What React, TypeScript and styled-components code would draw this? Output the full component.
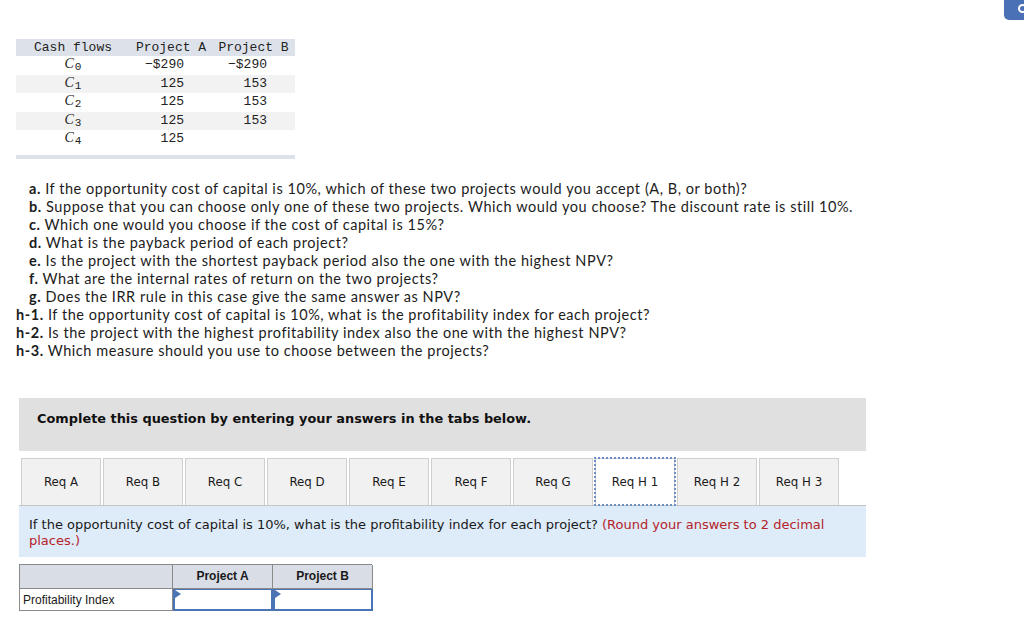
import React from "react";
import styled, { createGlobalStyle } from "styled-components";

const GlobalStyle = createGlobalStyle`
  html, body {
    margin: 0;
    padding: 0;
    background: #ffffff;
    overflow: hidden;
  }
  body {
    font-family: "Lato", "Liberation Sans", sans-serif;
    color: #1a1a1a;
  }
`;

const Page = styled.div`
  position: relative;
  width: 1024px;
  height: 617px;
  padding: 39px 0 0 16px;
  box-sizing: border-box;
`;

const CornerButton = styled.div`
  position: absolute;
  top: -6px;
  right: -14px;
  width: 34px;
  height: 26px;
  border-radius: 5px;
  background: #4a70b6;
  &::after {
    content: "";
    position: absolute;
    left: 14px;
    top: 10px;
    width: 9px;
    height: 9px;
    border: 2px solid #ffffff;
    border-radius: 50%;
    box-sizing: border-box;
  }
`;

/* cash flow table */
const FlowTable = styled.div`
  width: 279px;
  display: grid;
  grid-template-columns: 114px 82px 83px;
  font-family: "Liberation Mono", "Courier New", monospace;
  font-size: 13px;
  color: #222;
`;

const FlowCell = styled.div<{ $head?: boolean; $shade?: boolean; $num?: boolean }>`
  height: ${(p) => (p.$head ? "17px" : "18.5px")};
  line-height: ${(p) => (p.$head ? "17px" : "18.5px")};
  background: ${(p) => (p.$head ? "#dde2ea" : p.$shade ? "#f2f2f2" : "#ffffff")};
  text-align: ${(p) => (p.$num ? "right" : "center")};
  padding-right: ${(p) => (p.$num ? "28px" : "0")};
  white-space: nowrap;
  overflow: hidden;
`;

const FlowLabel = styled.span`
  display: inline-block;
  line-height: 1;
  font-family: "Liberation Serif", serif;
  font-style: italic;
  font-size: 14px;
  sub {
    font-family: "Liberation Mono", monospace;
    font-style: normal;
    font-size: 11px;
    line-height: 1;
    vertical-align: -2px;
    margin-left: 1px;
  }
`;

const FlowFooter = styled.div`
  width: 279px;
  height: 4px;
  margin-top: 6px;
  background: #dde2ea;
`;

/* questions */
const Questions = styled.div`
  margin-top: 21px;
  font-size: 14.5px;
  letter-spacing: 0.55px;
  line-height: 18px;
  color: #1c1c1c;
`;

const Question = styled.div<{ $indent?: boolean }>`
  padding-left: ${(p) => (p.$indent ? "13px" : "0")};
  white-space: nowrap;
  b {
    font-weight: 700;
  }
`;

/* instructions */
const Banner = styled.div`
  margin: 38px 0 0 3px;
  width: 847px;
  height: 53px;
  box-sizing: border-box;
  padding: 13px 0 0 18px;
  background: #e0e0e0;
  font-family: "DejaVu Sans", Verdana, sans-serif;
  font-weight: 700;
  font-size: 12.9px;
  color: #111;
`;

const Tabs = styled.div`
  margin: 7px 0 0 5px;
  display: flex;
  gap: 2px;
`;

const Tab = styled.div<{ $active?: boolean }>`
  width: 80px;
  height: 47px;
  box-sizing: border-box;
  display: flex;
  align-items: center;
  justify-content: center;
  border: 1px solid #cfcfcf;
  border-bottom: none;
  background: ${(p) => (p.$active ? "#ffffff" : "#f1f1f1")};
  outline: ${(p) => (p.$active ? "2px dotted #6c8fc7" : "none")};
  outline-offset: -1px;
  font-family: "DejaVu Sans", Verdana, sans-serif;
  font-size: 11.8px;
  color: #1a1a1a;
  position: relative;
  z-index: ${(p) => (p.$active ? 1 : 0)};
`;

const Prompt = styled.div`
  margin-left: 3px;
  width: 847px;
  height: 52px;
  box-sizing: border-box;
  padding: 11px 30px 0 10px;
  border-top: 1px solid #c4c4c4;
  background: #deebf8;
  font-family: "DejaVu Sans", Verdana, sans-serif;
  font-size: 13px;
  line-height: 16px;
  color: #1a1a1a;
`;

const Hint = styled.span`
  color: #b5232a;
`;

/* answer grid */
const AnswerTable = styled.div`
  margin: 7px 0 0 3px;
  width: 353px;
  display: grid;
  grid-template-columns: 153px 100px 100px;
  grid-template-rows: 24px 22px;
  border-top: 1px solid #8a8a8a;
  border-left: 1px solid #8a8a8a;
  box-sizing: border-box;
  font-family: "Liberation Sans", Arial, sans-serif;
  font-size: 12px;
  color: #1a1a1a;
`;

const HeadCell = styled.div`
  background: #d9dde6;
  border-right: 1px solid #8a8a8a;
  border-bottom: 1px solid #8a8a8a;
  display: flex;
  align-items: center;
  justify-content: center;
  font-weight: 700;
`;

const RowLabel = styled.div`
  border-right: 1px solid #8a8a8a;
  border-bottom: 1px solid #8a8a8a;
  display: flex;
  align-items: center;
  padding-left: 3px;
  padding-top: 1px;
`;

const InputCell = styled.div`
  position: relative;
  border: 2px solid #4a74b4;
  border-top-width: 1px;
  background: #ffffff;
  &::before {
    content: "";
    position: absolute;
    left: 0;
    top: 0;
    border-left: 6px solid #4a74b4;
    border-top: 4px solid transparent;
    border-bottom: 4px solid transparent;
  }
`;

const flows = [
  { n: "0", a: "−$290", b: "−$290" },
  { n: "1", a: "125", b: "153" },
  { n: "2", a: "125", b: "153" },
  { n: "3", a: "125", b: "153" },
  { n: "4", a: "125", b: "" },
];

const questions: [string, string, boolean][] = [
  ["a.", " If the opportunity cost of capital is 10%, which of these two projects would you accept (A, B, or both)?", true],
  ["b.", " Suppose that you can choose only one of these two projects. Which would you choose? The discount rate is still 10%.", true],
  ["c.", " Which one would you choose if the cost of capital is 15%?", true],
  ["d.", " What is the payback period of each project?", true],
  ["e.", " Is the project with the shortest payback period also the one with the highest NPV?", true],
  ["f.", " What are the internal rates of return on the two projects?", true],
  ["g.", " Does the IRR rule in this case give the same answer as NPV?", true],
  ["h-1.", " If the opportunity cost of capital is 10%, what is the profitability index for each project?", false],
  ["h-2.", " Is the project with the highest profitability index also the one with the highest NPV?", false],
  ["h-3.", " Which measure should you use to choose between the projects?", false],
];

const tabs = ["Req A", "Req B", "Req C", "Req D", "Req E", "Req F", "Req G", "Req H 1", "Req H 2", "Req H 3"];

export default function App() {
  return (
    <Page>
      <GlobalStyle />
      <CornerButton />
      <FlowTable>
        <FlowCell $head>Cash flows</FlowCell>
        <FlowCell $head>Project A</FlowCell>
        <FlowCell $head>Project B</FlowCell>
        {flows.map((f, i) => (
          <React.Fragment key={f.n}>
            <FlowCell $shade={i % 2 === 1}>
              <FlowLabel>
                C<sub>{f.n}</sub>
              </FlowLabel>
            </FlowCell>
            <FlowCell $shade={i % 2 === 1} $num>
              {f.a}
            </FlowCell>
            <FlowCell $shade={i % 2 === 1} $num>
              {f.b}
            </FlowCell>
          </React.Fragment>
        ))}
      </FlowTable>
      <FlowFooter />

      <Questions>
        {questions.map(([label, text, indent]) => (
          <Question key={label} $indent={indent}>
            <b>{label}</b>
            {text}
          </Question>
        ))}
      </Questions>

      <Banner>Complete this question by entering your answers in the tabs below.</Banner>

      <Tabs>
        {tabs.map((t) => (
          <Tab key={t} $active={t === "Req H 1"}>
            {t}
          </Tab>
        ))}
      </Tabs>
      <Prompt>
        If the opportunity cost of capital is 10%, what is the profitability index for each project?{" "}
        <Hint>(Round your answers to 2 decimal places.)</Hint>
      </Prompt>

      <AnswerTable>
        <HeadCell />
        <HeadCell>Project A</HeadCell>
        <HeadCell>Project B</HeadCell>
        <RowLabel>Profitability Index</RowLabel>
        <InputCell />
        <InputCell />
      </AnswerTable>
    </Page>
  );
}
